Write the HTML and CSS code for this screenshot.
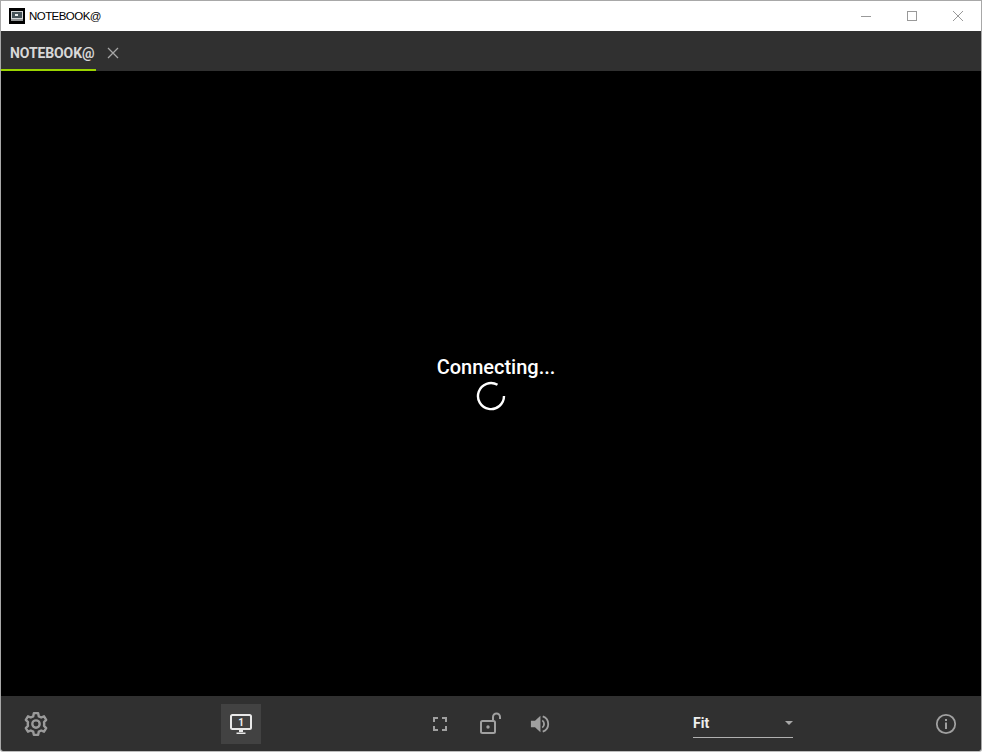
FILE: index.html
```html
<!DOCTYPE html>
<html lang="en">
<head>
<meta charset="utf-8">
<title>NOTEBOOK@</title>
<link rel="stylesheet" href="styles.css">
</head>
<body>
<div class="window">
  <header class="titlebar">
    <svg class="app-icon" width="16" height="16" viewBox="0 0 16 16">
      <rect width="16" height="16" fill="#000"/>
      <rect x="2" y="3" width="12" height="8" fill="#d4d6d7"/>
      <rect x="3" y="4" width="10" height="6" fill="#465358"/>
      <rect x="6" y="6" width="3" height="2" fill="#eef0f0"/>
      <rect x="2" y="11" width="12" height="2" fill="#8f9293"/>
    </svg>
    <span class="app-title">NOTEBOOK@</span>
    <div class="win-controls">
      <svg class="win-btn" width="12" height="12" viewBox="0 0 12 12"><path d="M1 6.5h10" stroke="#999" fill="none"/></svg>
      <svg class="win-btn" width="12" height="12" viewBox="0 0 12 12"><rect x="1.5" y="1.5" width="9" height="9" stroke="#999" fill="none"/></svg>
      <svg class="win-btn" width="12" height="12" viewBox="0 0 12 12"><path d="M1 1l10 10M11 1L1 11" stroke="#999" fill="none"/></svg>
    </div>
  </header>
  <nav class="tabbar">
    <div class="tab">
      <span class="tab-label">NOTEBOOK@</span>
      <svg class="tab-close" width="12" height="12" viewBox="0 0 12 12"><path d="M1 1l10 10M11 1L1 11" stroke="#a6a6a6" stroke-width="1.3" fill="none"/></svg>
    </div>
  </nav>
  <main class="stage">
    <div class="status">
      <div class="status-text">Connecting...</div>
      <svg class="spinner" width="30" height="30" viewBox="0 0 30 30"><path d="M21.5 3.8A13 13 0 1 0 28 15" stroke="#fff" stroke-width="2.4" fill="none"/></svg>
    </div>
  </main>
  <footer class="toolbar">
    <svg class="icon gear" width="26" height="26" viewBox="0 0 24 24" fill="none" stroke="#9a9a9a" stroke-width="2.2" stroke-linejoin="round"><circle cx="12" cy="12" r="3.4"/><path d="M10 2h4l.6 3 2.2 1 2.6-1.1 2 3.300-2 2 .2 1.800-.2 1.800 2 2-2 3.300-2.600-1.100-2.200 1-.6 3h-4l-.6-3-2.200-1-2.600 1.100-2-3.300 2-2-.2-1.800.2-1.800-2-2 2-3.300 2.600 1.100 2.200-1z"/></svg>
    <div class="monitor-btn">
      <svg width="24" height="22" viewBox="0 0 24 22" fill="none"><rect x="2" y="2" width="20" height="14" rx="1.500" stroke="#e8e8e8" stroke-width="2"/><path d="M10 17h4v2h-4zM7.500 19.500h9v1.500h-9z" fill="#e8e8e8"/></svg>
      <span class="monitor-num">1</span>
    </div>
    <svg class="icon fullscreen" width="16" height="16" viewBox="0 0 16 16" fill="none" stroke="#a0a0a0" stroke-width="2"><path d="M2 6V2h4M10 2h4v4M14 10v4h-4M6 14H2v-4"/></svg>
    <svg class="icon lock" width="24" height="24" viewBox="0 0 24 24" fill="none" stroke="#a0a0a0" stroke-width="2"><rect x="2" y="9" width="14" height="12" rx="1.500"/><circle cx="9" cy="15" r="1.700" fill="#a0a0a0" stroke="none"/><path d="M14 8V5a3.500 3.500 0 0 1 7 0v2"/></svg>
    <svg class="icon speaker" width="20" height="20" viewBox="0 0 22 22" fill="none"><path d="M1 7.500h4.500L11.500 2v18l-6-5.500H1z" fill="#a0a0a0"/><path d="M13.500 7a5 5 0 0 1 0 8" stroke="#a0a0a0" stroke-width="2"/><path d="M14 2.500a9 9 0 0 1 0 17" stroke="#a0a0a0" stroke-width="2"/></svg>
    <div class="select">
      <span class="select-value">Fit</span>
      <span class="select-arrow"></span>
    </div>
    <svg class="icon info" width="22" height="22" viewBox="0 0 22 22" fill="none"><circle cx="11" cy="11" r="9.200" stroke="#a0a0a0" stroke-width="1.800"/><rect x="10" y="9.500" width="2" height="6.500" fill="#a0a0a0"/><rect x="10" y="6" width="2" height="2" fill="#a0a0a0"/></svg>
  </footer>
</div>
</body>
</html>
```

FILE: styles.css
```css
* { box-sizing: border-box; }
html, body { margin: 0; padding: 0; background: #fff; overflow: hidden; }
.window {
  width: 982px;
  height: 752px;
  display: flex;
  flex-direction: column;
  border: 1px solid #a8a8a8;
  border-bottom-color: #bdbdbd;
  border-radius: 0 0 3px 3px;
  font-family: Roboto, "Liberation Sans", sans-serif;
  overflow: hidden;
}
.titlebar {
  height: 30px;
  flex: none;
  display: flex;
  align-items: center;
  padding-left: 8px;
  background: #fff;
}
.app-title {
  margin-left: 4px;
  font-family: "Liberation Sans", Arial, sans-serif;
  font-size: 11.5px;
  letter-spacing: -0.55px;
  color: #000;
}
.win-controls {
  margin-left: auto;
  display: flex;
  gap: 34px;
  padding-right: 17px;
}
.tabbar {
  height: 40px;
  flex: none;
  background: #303030;
  display: flex;
}
.tab {
  width: 95px;
  height: 40px;
  padding: 6px 0 0 9px;
  display: flex;
  align-items: center;
  border-bottom: 2px solid #9ad400;
  position: relative;
  overflow: visible;
}
.tab-label {
  font-size: 14px;
  font-weight: 700;
  color: #d8d8d8;
  letter-spacing: -0.1px;
  white-space: nowrap;
}
.tab-close { position: absolute; left: 106px; top: 16px; }
.stage {
  flex: 1;
  background: #000;
  display: flex;
  flex-direction: column;
  align-items: center;
  padding-top: 284px;
}
.status {
  display: flex;
  flex-direction: column;
  align-items: center;
  width: 140px;
}
.status-text {
  font-size: 20px;
  line-height: 24px;
  font-weight: 500;
  color: #fff;
  white-space: nowrap;
  margin-left: 10px;
}
.spinner { margin-top: 2px; margin-left: -1px; }
.toolbar {
  height: 55px;
  flex: none;
  background: #303030;
  display: flex;
  align-items: center;
  position: relative;
}
.icon { flex: none; display: block; }
.gear { margin-left: 22px; }
.monitor-btn {
  width: 40px;
  height: 40px;
  margin-left: 172px;
  background: #424242;
  display: flex;
  align-items: center;
  justify-content: center;
  position: relative;
}
.monitor-num {
  position: absolute;
  left: 0;
  right: 0;
  top: 13px;
  text-align: center;
  font-size: 10px;
  line-height: 12px;
  font-weight: 700;
  color: #eee;
}
.fullscreen { margin-left: 171px; }
.lock { margin-left: 31px; }
.speaker { margin-left: 27px; }
.select {
  width: 100px;
  height: 28px;
  margin-left: 143px;
  border-bottom: 1px solid #b0b0b0;
  display: flex;
  align-items: center;
  justify-content: space-between;
}
.select-value { font-size: 14px; font-weight: 700; color: #eee; }
.select-arrow {
  width: 0;
  height: 0;
  border-left: 4px solid transparent;
  border-right: 4px solid transparent;
  border-top: 4px solid #a8a8a8;
}
.info { margin-left: 142px; }
```
